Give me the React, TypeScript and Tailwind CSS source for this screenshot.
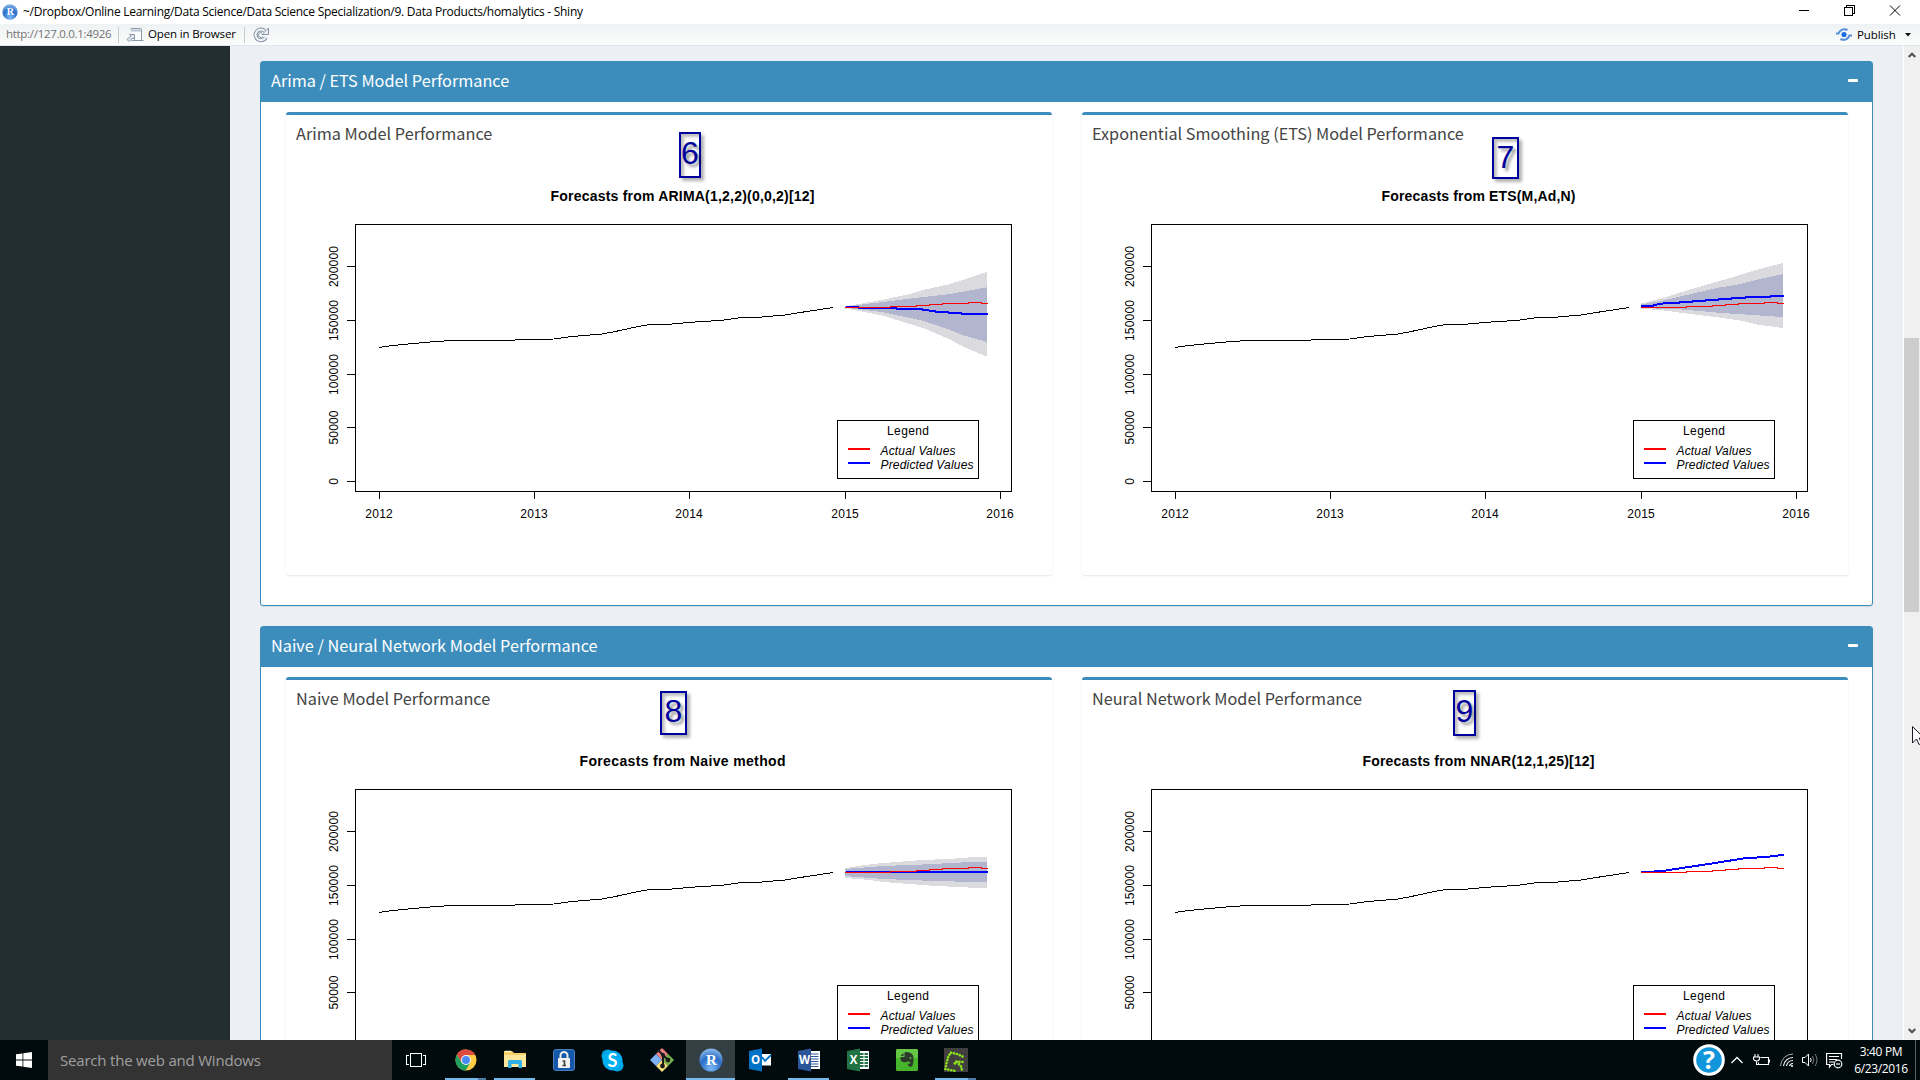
import type { ReactNode } from "react";

type Pt = [number, number];

interface Forecast {
  title: string;
  titleWidth: number;
  outer?: Pt[];
  inner?: Pt[];
  predicted: Pt[];
}

const history: Pt[] = [
  [379, 347.5], [389, 346], [401, 344.7], [426, 342.3], [451, 340.5], [515, 340], [554, 339], [570, 336.7],
  [602, 334], [613, 332], [636, 327], [649, 324.6], [669, 324.3], [689, 322.4], [721, 320.4], [738, 318],
  [760, 317.2], [787, 314.8], [797, 313], [833, 307.5],
];

const actual: Pt[] = [
  [845, 307.5], [890, 307.5], [891, 306.5], [916, 306.5], [917, 305.5], [929, 305.5], [930, 304.5], [942, 304.5],
  [943, 303.5], [968, 303.5], [969, 302.5], [981, 302.5], [982, 303.5], [988, 303.5],
];

const arima: Forecast = {
  title: "Forecasts from ARIMA(1,2,2)(0,0,2)[12]",
  titleWidth: 264,
  outer: [
    [845, 306], [859, 304], [883, 299.7], [910, 294], [923, 290], [950, 284], [987, 271.7],
    [987, 356.7], [961, 345.7], [950, 339.5], [923, 328], [883, 315.7], [858, 310.7], [845, 308.5],
  ],
  inner: [
    [845, 306.5], [883, 302], [923, 297], [950, 294], [987, 287.3],
    [987, 342], [961, 334.5], [950, 330], [923, 320.7], [883, 312.3], [858, 309], [845, 308],
  ],
  predicted: [
    [846, 307], [858, 307], [859, 308], [896, 308], [897, 309], [922, 309], [923, 310], [935, 311], [936, 312],
    [948, 312], [949, 313], [961, 313], [962, 314], [988, 314],
  ],
};

const ets: Forecast = {
  title: "Forecasts from ETS(M,Ad,N)",
  titleWidth: 194,
  outer: [
    [845, 303.5], [867, 298], [887, 291.7], [914, 283.7], [934, 278], [961, 269.7], [987, 263],
    [987, 328], [961, 324.5], [947, 321], [922, 317.3], [884, 312.7], [867, 310.3], [845, 308.7],
  ],
  inner: [
    [845, 304.5], [867, 300.5], [922, 287.7], [941, 284.7], [961, 279.7], [987, 274],
    [987, 317], [961, 315.3], [922, 312.7], [884, 309.3], [845, 308],
  ],
  predicted: [
    [845, 306], [857, 306], [858, 305], [864, 304], [870, 303], [883, 303], [884, 302], [896, 302], [897, 301],
    [909, 301], [910, 300], [922, 300], [923, 299], [935, 299], [936, 298], [949, 298], [950, 297], [974, 297],
    [975, 296], [988, 296],
  ],
};

const naive: Forecast = {
  title: "Forecasts from Naive method",
  titleWidth: 206,
  outer: [
    [845, 303], [852, 302], [864, 300], [883, 298], [909, 296], [922, 295], [948, 294], [961, 293], [974, 292],
    [987, 292], [987, 323], [974, 323], [961, 322], [935, 321], [922, 320], [883, 317], [870, 315], [858, 314],
    [845, 313],
  ],
  inner: [
    [845, 304], [870, 302], [883, 301], [909, 300], [935, 299], [948, 298], [974, 297], [987, 297],
    [987, 317], [974, 317], [935, 316], [909, 315], [883, 314], [870, 313], [845, 311],
  ],
  predicted: [[846, 307], [988, 307]],
};

const nnar: Forecast = {
  title: "Forecasts from NNAR(12,1,25)[12]",
  titleWidth: 232,
  predicted: [
    [845, 307], [858, 306.5], [870, 305.5], [889, 302.5], [916, 298.5], [947, 293.5], [961, 292.5], [974, 291.5],
    [988, 289.7],
  ],
};

const line = (pts: Pt[]) => pts.map((p) => p.join(",")).join(" ");

const yTicks: [number, string, number][] = [
  [266.5, "200000", 41], [320.5, "150000", 41], [374.5, "100000", 41], [427.5, "50000", 34], [481.5, "0", 6.5],
];
const xTicks: [number, string][] = [[379.5, "2012"], [534.5, "2013"], [689.5, "2014"], [845.5, "2015"], [1000.5, "2016"]];

function Plot({ f }: { f: Forecast }) {
  return (
    <svg
      width="766"
      height="420"
      viewBox="286 155 766 420"
      className="block font-['Liberation_Sans',sans-serif]"
      fill="#000"
      fontSize="12"
    >
      <text x="682.5" y="200.5" textAnchor="middle" fontSize="14" fontWeight="bold" textLength={f.titleWidth}>
        {f.title}
      </text>
      <g shapeRendering="crispEdges" fill="none" stroke="#000">
        {f.outer && <polygon points={line(f.outer)} fill="#dbdbdf" stroke="none" />}
        {f.inner && <polygon points={line(f.inner)} fill="#b1b5ce" stroke="none" />}
        <polyline points={line(history)} />
        <polyline points={line(f.predicted)} stroke="#00f" strokeWidth="2" />
        <polyline points={line(actual)} stroke="#f00" />
        <rect x="355.5" y="224.5" width="656" height="267" />
        {yTicks.map(([y]) => (
          <path key={y} d={`M347 ${y}H355`} />
        ))}
        {xTicks.map(([x]) => (
          <path key={x} d={`M${x} 492V499`} />
        ))}
        <rect x="837.5" y="420.5" width="141" height="58" fill="#fff" />
        <path d="M848 449H870" stroke="#f00" strokeWidth="2" />
        <path d="M848 463H870" stroke="#00f" strokeWidth="2" />
      </g>
      {yTicks.map(([y, t, w]) => (
        <text key={t} transform={`translate(337.5 ${y}) rotate(-90)`} textAnchor="middle" textLength={w}>
          {t}
        </text>
      ))}
      {xTicks.map(([x, t]) => (
        <text key={t} x={x - 0.5} y="518" textAnchor="middle" textLength="27.5">
          {t}
        </text>
      ))}
      <text x="908" y="435" textAnchor="middle" textLength="42">Legend</text>
      <g fontStyle="italic">
        <text x="880.5" y="455" textLength="75">Actual Values</text>
        <text x="880.5" y="469" textLength="93">Predicted Values</text>
      </g>
    </svg>
  );
}

function Callout({ n, className }: { n: string; className: string }) {
  return (
    <div
      className={`absolute flex justify-center border-2 border-[#00009c] font-['Liberation_Sans',sans-serif] text-[32px] text-[#00009c] shadow-[3px_3px_3px_rgba(0,0,0,0.3),inset_3px_3px_3px_rgba(0,0,0,0.25)] [text-shadow:3px_3px_3px_rgba(0,0,0,0.4)] ${className}`}
    >
      {n}
    </div>
  );
}

function Card({ title, f, children }: { title: ReactNode; f: Forecast; children: ReactNode }) {
  return (
    <section className="relative h-[463px] w-[766px] rounded-[3px] border-t-[3px] border-[#3c8dbc] bg-white shadow-[0_1px_2px_rgba(0,0,0,0.1)]">
      <h3 className="h-10 pl-[10px] text-[16.25px] leading-[36px] text-[#444]">{title}</h3>
      <Plot f={f} />
      {children}
    </section>
  );
}

function Box({ title, children }: { title: string; children: ReactNode }) {
  return (
    <section className="h-[545px] w-[1613px] shrink-0 rounded-[3px] border border-[#3c8dbc] bg-white shadow-[0_1px_1px_rgba(0,0,0,0.1)]">
      <header className="flex h-10 items-center justify-between bg-[#3c8dbc] pr-[14px] pb-[2px] pl-[10px] text-white">
        <h2 className="pb-[2px] text-[16.25px] leading-none">{title}</h2>
        <span className="mb-px h-[3px] w-[10px] rounded-[1px] bg-white" />
      </header>
      <div className="flex gap-[30px] pt-[10px] pl-[25px]">{children}</div>
    </section>
  );
}

function RLogo({ size, id }: { size: number; id: string }) {
  return (
    <svg width={size} height={size} viewBox="0 0 24 24">
      <defs>
        <radialGradient id={id} cx="50%" cy="85%" r="85%">
          <stop offset="0" stopColor="#7db8f5" />
          <stop offset="0.55" stopColor="#2a6fc9" />
          <stop offset="1" stopColor="#8db9ea" />
        </radialGradient>
      </defs>
      <circle cx="12" cy="12" r="11.5" fill={`url(#${id})`} />
      <text x="12.5" y="16.8" textAnchor="middle" fontSize="15" fontWeight="bold" fill="#fff" fontFamily="Liberation Serif, serif">
        R
      </text>
    </svg>
  );
}

function TitleBar() {
  return (
    <div className="flex h-6 items-center bg-white">
      <div className="pl-[2px]">
        <RLogo size={16} id="rTitle" />
      </div>
      <span className="pl-[5px] text-[12px] tracking-[-0.26px] text-black">
        ~/Dropbox/Online Learning/Data Science/Data Science Specialization/9. Data Products/homalytics - Shiny
      </span>
      <svg className="mr-[19px] mb-[4px] ml-auto" width="102" height="11" viewBox="0 0 102 11" fill="none" stroke="#000" shapeRendering="crispEdges">
        <path d="M0 5.500H10M45.500 2.500H53.500V10.500H45.500ZM47.500 2.500V.5H55.500V8.500H53.500" />
        <path d="M91 .5L101 10.500M101 .5L91 10.500" shapeRendering="auto" />
      </svg>
    </div>
  );
}

function ToolBar() {
  return (
    <div className="flex h-[22px] items-center border-b border-[#e3e6e8] bg-linear-to-b from-[#eff2f3] to-[#fcfdfd] pl-[6px] text-[11.500px]">
      <span className="w-[112px] shrink-0 pb-px tracking-[-0.3px] text-[#737373]">http://127.0.0.1:4926</span>
      <span className="h-4 w-px bg-[#c8cbcd]" />
      <svg className="ml-[7px]" width="18" height="14" viewBox="0 0 18 14" fill="#f8fafc" stroke="#8b98a8">
        <path d="M4.500 1.500Q4.500.5 5.500.5H14.500Q15.500.5 15.500 1.500V12.500H5.500" />
        <path d="M5 2.500H15" stroke="#b9c5d2" strokeWidth="2" />
        <path d="M14 12.500H17.500" />
        <path d="M1 11.500L5 8L3.500 6.500H8.500V11.500L7 10L3 13.500Z" fill="#dfe8f1" />
      </svg>
      <span className="w-[100px] pb-px pl-[4px] tracking-[-0.15px] text-black">Open in Browser</span>
      <span className="h-4 w-px bg-[#c8cbcd]" />
      <svg className="ml-[8px]" width="16" height="16" viewBox="0 0 16 16" fill="none">
        <path d="M12.800 10.500A5.400 5.400 0 1 1 11.500 3.800" stroke="#8694a5" strokeWidth="4" />
        <path d="M9 7.500H15.500V1Z" fill="#eef2f6" stroke="#8694a5" />
        <path d="M12.600 10.500A5.400 5.400 0 1 1 11.500 3.800" stroke="#f1f5f8" strokeWidth="2" />
        <path d="M10 9.500A2.500 2.500 0 1 1 9 5.800" stroke="#8694a5" />
      </svg>
      <svg className="ml-auto" width="16" height="13" viewBox="0 0 16 13" fill="none" stroke="#5290d9" strokeWidth="2">
        <path d="M0 5.500H2.500C4 2 7.500 0 11.500 2M16 7.500H13.500C12 11 8.500 13 4.500 11" />
        <circle cx="8" cy="6.500" r="2.600" fill="#1e6fe0" stroke="none" />
      </svg>
      <span className="w-[53px] pl-[5px] text-[11.500px] tracking-[-0.1px] text-black">Publish</span>
      <svg className="mr-[9px]" width="6" height="4" viewBox="0 0 6 4">
        <path d="M0 0H6L3 3.500Z" fill="#111" />
      </svg>
    </div>
  );
}

function ScrollBar() {
  return (
    <div className="flex w-[17px] flex-col items-center border-l border-white bg-[#f0f0f0] pr-px">
      <svg className="mt-[6px]" width="8" height="6" viewBox="0 0 8 6" fill="none" stroke="#505050" strokeWidth="2">
        <path d="M.7 5L4 1.700L7.300 5" />
      </svg>
      <div className="mt-[280px] h-[274px] w-[15px] bg-[#cdcdcd]" />
      <svg className="mt-auto mb-[6px]" width="8" height="6" viewBox="0 0 8 6" fill="none" stroke="#505050" strokeWidth="2">
        <path d="M.7 1L4 4.300L7.300 1" />
      </svg>
    </div>
  );
}

function Task({ children, bar = "", active = false }: { children: ReactNode; bar?: string; active?: boolean }) {
  return (
    <div className={`relative flex h-10 w-[49px] items-center justify-center ${active ? "bg-[#343f43]" : ""}`}>
      {children}
      {bar && (
        <div className={`absolute bottom-0 flex h-[2px] justify-end bg-[#76b9ed] ${active ? "inset-x-0" : "inset-x-[4px]"}`}>
          {bar === "multi" && <span className="h-full w-[8px] bg-[#4d7ba3]" />}
        </div>
      )}
    </div>
  );
}

function OfficeIcon({ letter, color, children }: { letter: string; color: string; children: ReactNode }) {
  return (
    <svg width="24" height="24" viewBox="0 0 24 24">
      {children}
      <path d="M1 3L14 .5V23.500L1 21Z" fill={color} />
      <text x="7.500" y="16" textAnchor="middle" fontSize="11.500" fontWeight="bold" fill="#fff" fontFamily="Open Sans, sans-serif">
        {letter}
      </text>
    </svg>
  );
}

function TaskBar() {
  return (
    <div className="flex h-10 items-center bg-[#010b0e] text-white">
      <div className="flex w-12 justify-center">
        <svg width="16" height="16" viewBox="0 0 16 16" fill="#fff">
          <path d="M0 2.300L6.500 1.400V7.600H0ZM7.300 1.300L16 0V7.600H7.300ZM0 8.400H6.500V14.600L0 13.700ZM7.300 8.400H16V16L7.300 14.700Z" />
        </svg>
      </div>
      <div className="flex h-10 w-[344px] items-center bg-[#333] pl-3 text-[15px] tracking-[-0.2px] text-[#a0a0a0]">
        Search the web and Windows
      </div>
      <Task>
        <svg className="mr-px" width="20" height="16" viewBox="0 0 20 16" fill="none" stroke="#fff" shapeRendering="crispEdges">
          <path d="M4.500 1.500H15.500V14.500H4.500ZM3 3.500H.5V12.500H3M17 3.500H19.500V12.500H17" />
        </svg>
      </Task>
      <Task bar="multi">
        <svg width="22" height="22" viewBox="0 0 24 24">
          <circle cx="12" cy="12" r="11.500" fill="#fc4" />
          <path d="M12 6.500H22.200A11.500 11.500 0 0 0 2.040 6.250L7.200 14.800Z" fill="#dd4b3e" />
          <path d="M2.040 6.250A11.500 11.500 0 0 0 11.500 23.500L16.800 14.700L12 17.200L7.200 14.700Z" fill="#1da05f" />
          <circle cx="12" cy="12" r="5.500" fill="#f5f5f5" />
          <circle cx="12" cy="12" r="4.300" fill="#4a8af4" />
        </svg>
      </Task>
      <Task bar="one">
        <svg width="22" height="20" viewBox="0 0 22 20">
          <path d="M0 1H8L10 3H22V17H0Z" fill="#f3cf65" />
          <path d="M0 5H22V17H0Z" fill="#fce69a" />
          <path d="M1 1.500H7" stroke="#fff3c4" strokeWidth="1.500" />
          <path d="M4 18V11.500Q4 10 5.500 10H16.500Q18 10 18 11.500V18H14.500V14H7.500V18Z" fill="#2fb0e8" />
        </svg>
      </Task>
      <Task>
        <svg width="22" height="22" viewBox="0 0 22 22">
          <rect x=".5" y=".5" width="21" height="21" rx="2.500" fill="#1557ab" stroke="#4a7fbe" />
          <path d="M7.500 10V6.500A3.500 3.500 0 0 1 14.500 6.500V10" fill="none" stroke="#e8e8e8" strokeWidth="2" />
          <rect x="5" y="9" width="12" height="10" rx="1" fill="#f2f2f2" />
          <path d="M9.500 12H11.500V16M9.500 16.500H13" stroke="#444" strokeWidth="1.600" fill="none" />
        </svg>
      </Task>
      <Task>
        <svg width="23" height="23" viewBox="0 0 24 24">
          <circle cx="7" cy="7" r="6.500" fill="#00a4e4" />
          <circle cx="17" cy="17" r="6.500" fill="#00a4e4" />
          <circle cx="12" cy="12" r="10.500" fill="#00aff0" />
          <text x="12" y="18.500" textAnchor="middle" fontSize="19" fontWeight="bold" fill="#fff" fontFamily="Lato, sans-serif">
            S
          </text>
        </svg>
      </Task>
      <Task>
        <svg width="24" height="24" viewBox="0 0 24 24">
          <path d="M12 0L18 6L12 12L6 6Z" fill="#f08080" />
          <path d="M6 6L12 12L6 18L0 12Z" fill="#7fb2f5" />
          <path d="M18 6L24 12L18 18L12 12Z" fill="#7ab84e" />
          <path d="M12 12L18 18L12 24L6 18Z" fill="#fbe27c" />
          <path d="M8 2L13 7V18M13 7L18 12" fill="none" stroke="#1b1b1b" strokeWidth="2" />
          <circle cx="13" cy="7" r="2" fill="#1b1b1b" />
          <circle cx="18" cy="12" r="2.400" fill="#1b1b1b" />
          <circle cx="12.500" cy="18" r="2.400" fill="#1b1b1b" />
        </svg>
      </Task>
      <Task bar="one" active>
        <RLogo size={24} id="rTask" />
      </Task>
      <Task>
        <OfficeIcon letter="O" color="#0072c6">
          <path d="M13 6H23V17.500H13Z" fill="#fff" />
          <path d="M14 9L17 13L23 7" fill="none" stroke="#0072c6" strokeWidth="1.800" />
        </OfficeIcon>
      </Task>
      <Task bar="one">
        <OfficeIcon letter="W" color="#2b579a">
          <path d="M13 3H23V21H13Z" fill="#fff" />
          <path d="M14 6H21.500M14 8.500H21.500M14 11H21.500M14 13.500H21.500M14 16H21.500M14 18.500H21.500" stroke="#2b579a" />
        </OfficeIcon>
      </Task>
      <Task>
        <OfficeIcon letter="X" color="#217346">
          <path d="M13 3H23V21H13Z" fill="#fff" />
          <path d="M14 6H22M14 9H22M14 12H22M14 15H22M14 18H22" stroke="#217346" strokeWidth="1.800" strokeDasharray="3.500 1" />
        </OfficeIcon>
      </Task>
      <Task>
        <svg width="22" height="22" viewBox="0 0 22 22">
          <rect width="22" height="22" rx="1.500" fill="#47b52c" />
          <rect width="22" height="9" rx="1.500" fill="#63c745" />
          <path d="M8.500 3.500C11 2.500 14 3.500 16 5C18 7 18 12 16.500 16.500C15.500 18.500 12 18 12 15.800C12 14.500 13.500 14 14.500 15C14.500 13 13 12.800 12 12.300C11 13.500 9 13.500 7 13C4.500 12.500 4.500 10 4.500 8H8.500Z" fill="#2d3a2b" />
          <path d="M4.500 7L7.500 4V7Z" fill="#2d3a2b" />
          <circle cx="14.500" cy="9" r=".9" fill="#63c745" />
        </svg>
      </Task>
      <Task bar="multi">
        <svg width="24" height="24" viewBox="0 0 24 24">
          <rect width="24" height="24" fill="#413f3f" />
          <path
            d="M18.500 8.500L13 6L6.500 4.500L4 9.500L2.500 15L1.500 21L6 22L12 23M18.500 14L11.500 13.500L10 17.500M13 14L17.500 19L18 23"
            fill="none"
            stroke="#8be31a"
            strokeWidth="2.600"
            strokeLinecap="round"
            strokeDasharray="0.100 2.900"
          />
        </svg>
      </Task>
      <svg className="ml-auto" width="32" height="32" viewBox="0 0 32 32">
        <circle cx="16" cy="16" r="14.300" fill="#1296db" stroke="#fff" strokeWidth="3" />
        <text x="16" y="24.500" textAnchor="middle" fontSize="25" fontWeight="bold" fill="#fff" fontFamily="Open Sans, sans-serif">
          ?
        </text>
      </svg>
      <svg className="ml-[6px]" width="12" height="8" viewBox="0 0 12 8" fill="none" stroke="#fff" strokeWidth="1.300">
        <path d="M.5 7L6 1.500L11.500 7" />
      </svg>
      <svg className="ml-[10px]" width="17" height="12" viewBox="0 0 17 12" fill="none" stroke="#fff" strokeWidth="1.100">
        <path d="M7.500 3.500H15.500V10.500H5.500V8.500M16.500 5.500V8.500M2 0V3M5 0V3M.5 3H6.500V5Q6 7 3.500 7Q1 7 .5 5ZM3.500 7V10.500H5.500" />
      </svg>
      <svg className="ml-[10px]" width="14" height="14" viewBox="0 0 14 14" fill="none" stroke="#fff">
        <path d="M.5 13A12.500 12.500 0 0 1 13 1" stroke="#aaa" />
        <path d="M3.500 13A9.500 9.500 0 0 1 13 4.500M6.500 13A6.500 6.500 0 0 1 13 7.500M9.500 13A3.500 3.500 0 0 1 13 10.500" strokeWidth="1.200" />
        <circle cx="12" cy="13" r="1" fill="#fff" stroke="none" />
      </svg>
      <svg className="ml-[8px]" width="16" height="14" viewBox="0 0 16 14" fill="none" stroke="#fff">
        <path d="M.5 4.500H3L6.500 1V13L3 9.500H.5Z" />
        <path d="M8.500 5Q9.700 7 8.500 9" />
        <path d="M10.500 3Q13 7 10.500 11M13 1Q17 7 13 13" stroke="#777" />
      </svg>
      <svg className="ml-[8px]" width="17" height="17" viewBox="0 0 17 17" fill="none" stroke="#fff" strokeWidth="1.200">
        <path d="M7.500 12.500H5.500L3.500 15V12.500H.6V1.500H15.500V7M3 4.500H13M3 7.500H11M3 10H8" />
        <circle cx="12" cy="12" r="3.800" />
        <path d="M10 12H14" />
      </svg>
      <div className="ml-[11px] w-[54px] text-center text-[12px] leading-[17px] tracking-[-0.35px] whitespace-nowrap">
        <div>3:40 PM</div>
        <div>6/23/2016</div>
      </div>
      <div className="ml-[7px] h-10 w-[5px] border-l border-[#5a6163]" />
    </div>
  );
}

export default function App() {
  return (
    <div className="relative flex h-[1080px] w-[1920px] flex-col overflow-hidden font-['Open_Sans',sans-serif]">
      <TitleBar />
      <ToolBar />
      <div className="flex h-[994px]">
        <aside className="w-[230px] bg-[#222d32]" />
        <main className="flex flex-1 flex-col gap-5 overflow-hidden bg-[#ecf0f5] pt-[15px] pl-[30px] font-['Noto_Sans_CJK_SC',sans-serif]">
          <Box title="Arima / ETS Model Performance">
            <Card title="Arima Model Performance" f={arima}>
              <Callout n="6" className="top-[17px] left-[393px] h-[46px] w-[22px] leading-[38px]" />
            </Card>
            <Card title="Exponential Smoothing (ETS) Model Performance" f={ets}>
              <Callout n="7" className="top-[22px] left-[410px] h-[42px] w-[27px] leading-[36px]" />
            </Card>
          </Box>
          <Box title="Naive / Neural Network Model Performance">
            <Card title="Naive Model Performance" f={naive}>
              <Callout n="8" className="top-[11px] left-[374px] h-[44px] w-[27px] leading-[37px]" />
            </Card>
            <Card title="Neural Network Model Performance" f={nnar}>
              <Callout n="9" className="top-[10px] left-[371px] h-[46px] w-[23px] leading-[39px]" />
            </Card>
          </Box>
        </main>
        <ScrollBar />
      </div>
      <TaskBar />
      <svg className="absolute top-[726px] left-[1912px]" width="8" height="19" viewBox="0 0 8 19" fill="#fff" stroke="#1a1a2a">
        <path d="M.5 .5V17L4.500 13L7 18.500L9.500 17.500L7.300 12H12Z" />
      </svg>
    </div>
  );
}
